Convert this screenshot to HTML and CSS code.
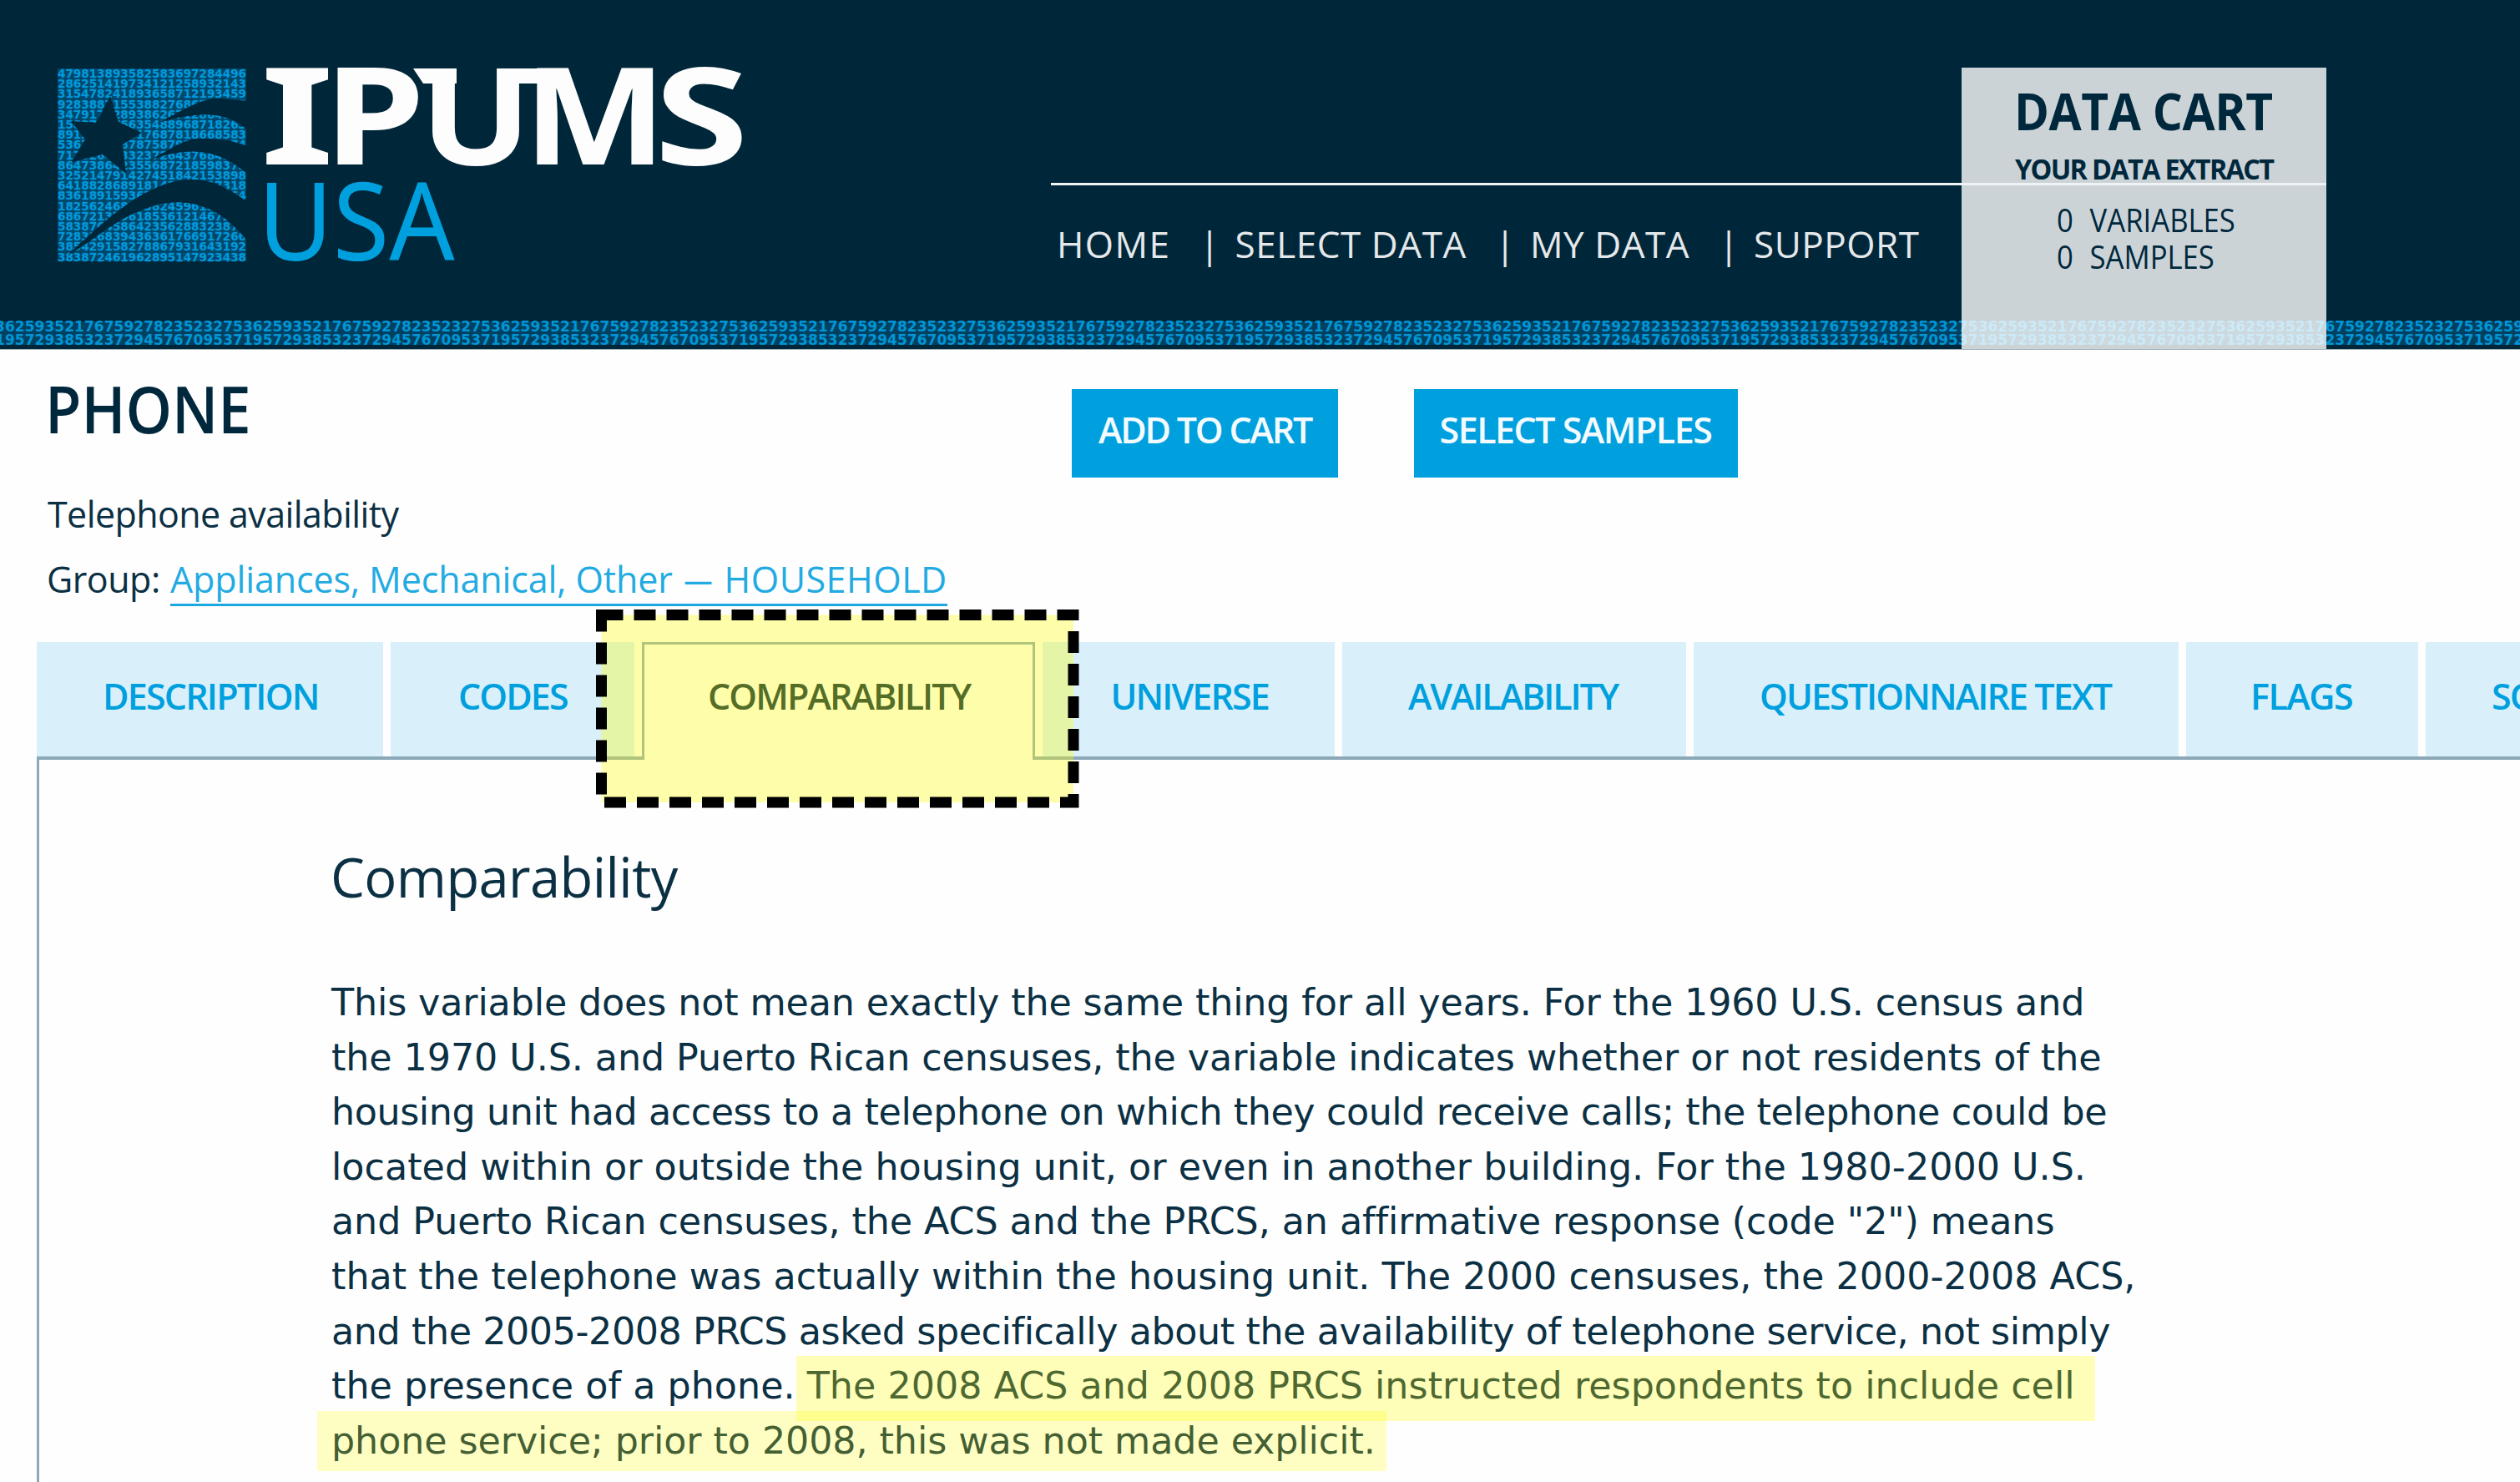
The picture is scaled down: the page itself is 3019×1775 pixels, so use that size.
FILE: index.html
```html
<!DOCTYPE html>
<html lang="en">
<head>
<meta charset="utf-8">
<title>IPUMS USA: PHONE</title>
<link rel="stylesheet" href="styles.css">
</head>
<body>
<header class="site-header">
  <div class="digit-strip" aria-hidden="true">
    <div>3625935217675927823523275362593521767592782352327536259352176759278235232753625935217675927823523275362593521767592782352327536259352176759278235232753625935217675927823523275362593521767592782352327536259352176759278235232753625935217675927823523275362593</div>
    <div>1957293853237294576709537195729385323729457670953719572938532372945767095371957293853237294576709537195729385323729457670953719572938532372945767095371957293853237294576709537195729385323729457670953719572938532372945767095371957293853237294576709537195729</div>
  </div>
  <svg class="logo" width="830" height="240" viewBox="0 0 830 240" role="img" aria-label="IPUMS USA">
    <rect class="logo-glow" width="226" height="231"/>
    <g class="logo-digits">
      <text x="0" y="11" textLength="226" lengthAdjust="spacingAndGlyphs">479813893582583697284496</text>
      <text x="0" y="23.2" textLength="226" lengthAdjust="spacingAndGlyphs">286251419734121258932143</text>
      <text x="0" y="35.4" textLength="226" lengthAdjust="spacingAndGlyphs">315478241893658712193459</text>
      <text x="0" y="47.6" textLength="226" lengthAdjust="spacingAndGlyphs">928388715538827686719345</text>
      <text x="0" y="59.8" textLength="226" lengthAdjust="spacingAndGlyphs">347917628938626712864938</text>
      <text x="0" y="72" textLength="226" lengthAdjust="spacingAndGlyphs">158371676635488968718263</text>
      <text x="0" y="84.2" textLength="226" lengthAdjust="spacingAndGlyphs">891264728917687818668583</text>
      <text x="0" y="96.4" textLength="226" lengthAdjust="spacingAndGlyphs">536728178787587923641974</text>
      <text x="0" y="108.6" textLength="226" lengthAdjust="spacingAndGlyphs">717326453323726437684153</text>
      <text x="0" y="120.8" textLength="226" lengthAdjust="spacingAndGlyphs">864738642355687218598373</text>
      <text x="0" y="133" textLength="226" lengthAdjust="spacingAndGlyphs">325214791427451842153898</text>
      <text x="0" y="145.2" textLength="226" lengthAdjust="spacingAndGlyphs">641882868918143658217318</text>
      <text x="0" y="157.4" textLength="226" lengthAdjust="spacingAndGlyphs">836189159367261843975264</text>
      <text x="0" y="169.6" textLength="226" lengthAdjust="spacingAndGlyphs">182562468173824596138472</text>
      <text x="0" y="181.8" textLength="226" lengthAdjust="spacingAndGlyphs">686721379618536121467238</text>
      <text x="0" y="194" textLength="226" lengthAdjust="spacingAndGlyphs">583876458642356288323871</text>
      <text x="0" y="206.2" textLength="226" lengthAdjust="spacingAndGlyphs">728316839436361766917266</text>
      <text x="0" y="218.4" textLength="226" lengthAdjust="spacingAndGlyphs">385429158278867931643192</text>
      <text x="0" y="230.6" textLength="226" lengthAdjust="spacingAndGlyphs">383872461962895147923438</text>
    </g>
    <g class="logo-cutout">
      <path d="M63 33 73 64 101 77 78 91 82 126 54 103 17 112 33 85 16 63 46 65Z"/>
      <path d="M118 66C150 52 165 36 195 36L228 39V74C205 54 175 48 118 66Z"/>
      <path d="M110 110C145 92 150 84 175 84L205 86 228 93V127C195 98 160 91 110 110Z"/>
      <path d="M12 224C60 178 110 133 161 133C190 133 210 148 228 160V208C195 163 150 150 105 168C70 180 45 205 12 224Z"/>
    </g>
    <g class="logo-name">
      <text transform="translate(243 115) scale(1.41 1)">I</text>
      <text transform="translate(319 115) scale(1.21 1)">P</text>
      <text transform="translate(434 115) scale(1.1 1)">U</text>
      <text transform="translate(558 115) scale(1.13 1)">M</text>
      <text transform="translate(715 115) scale(1.27 1)">S</text>
      <path d="M426 0H478V18H438Z M528 0H600V18H528Z"/>
    </g>
    <text class="logo-product" transform="translate(240 230) scale(.945 1)">USA</text>
  </svg>
  <div class="header-right">
    <nav class="main-nav">
      <a class="nav-home">HOME</a><i>|</i><a>SELECT DATA</a><i>|</i><a>MY DATA</a><i>|</i><a>SUPPORT</a>
    </nav>
    <aside class="cart">
      <h2>DATA CART</h2>
      <h3>YOUR DATA EXTRACT</h3>
      <dl>
        <div><dt>0</dt><dd>VARIABLES</dd></div>
        <div><dt>0</dt><dd>SAMPLES</dd></div>
      </dl>
    </aside>
  </div>
</header>
<section class="intro">
  <div class="summary">
    <h1>PHONE</h1>
    <p class="label">Telephone availability</p>
    <p><span class="group">Group:</span><a>Appliances, Mechanical, Other <span class="dash">—</span> <span class="level">HOUSEHOLD</span></a></p>
  </div>
  <div class="actions">
    <button class="add">ADD TO CART</button>
    <button class="select">SELECT SAMPLES</button>
  </div>
</section>
<nav class="tabs">
  <a class="desc">DESCRIPTION</a>
  <a class="codes">CODES</a>
  <a class="active">COMPARABILITY</a>
  <a class="universe">UNIVERSE</a>
  <a class="avail">AVAILABILITY</a>
  <a>QUESTIONNAIRE TEXT</a>
  <a class="flags">FLAGS</a>
  <a>SOURCE</a>
</nav>
<main class="panel">
  <h2>Comparability</h2>
  <p>
    <span class="snug">This variable does not mean exactly the same thing for all years. For the 1960 U.S. census and</span>
    <span>the 1970 U.S. and Puerto Rican censuses, the variable indicates whether or not residents of the</span>
    <span class="tight">housing unit had access to a telephone on which they could receive calls; the telephone could be</span>
    <span class="loose">located within or outside the housing unit, or even in another building. For the 1980-2000 U.S.</span>
    <span>and Puerto Rican censuses, the ACS and the PRCS, an affirmative response (code "2") means</span>
    <span class="loose">that the telephone was actually within the housing unit. The 2000 censuses, the 2000-2008 ACS,</span>
    <span class="tight">and the 2005-2008 PRCS asked specifically about the availability of telephone service, not simply</span>
    <span class="loose">the presence of a phone. The 2008 ACS and 2008 PRCS instructed respondents to include cell</span>
    <span>phone service; prior to 2008, this was not made explicit.</span>
  </p>
</main>
<div class="mark mark-first"></div>
<div class="mark mark-second"></div>
<svg class="callout" width="579" height="238" viewBox="0 0 579 238" aria-hidden="true">
  <rect x="6.5" y="6.5" width="565.5" height="224.5"/>
</svg>
</body>
</html>
```
FILE: styles.css
```css
* { box-sizing: border-box; margin: 0; padding: 0; }
body {
  position: relative;
  width: 3019px;
  height: 1775px;
  overflow: hidden;
  background: #fefefe;
  color: #0b3044;
  font-family: "Open Sans", "Noto Sans", sans-serif;
}

/* Header */
.site-header {
  position: relative;
  display: flex;
  height: 419px;
  padding: 82px 0 0 69px;
  overflow: hidden;
  background: #002639;
  border-bottom: 1px solid #9fb0b9;
}
.digit-strip {
  position: absolute;
  left: -6px;
  top: 383px;
  background: linear-gradient(#002639 2px, #004161 2px 30px, #002639 30px);
  color: #0096d6;
  font: bold 17px/16px "DejaVu Sans", sans-serif;
  letter-spacing: .05px;
  white-space: nowrap;
}
.logo { flex: none; display: block; overflow: visible; }
.logo-glow { fill: #00476a; }
.logo-digits { fill: #009cdf; stroke: #0088c4; stroke-width: .3; font: bold 14px "DejaVu Sans", sans-serif; }
.logo-cutout { fill: #002639; }
.logo-name { fill: #fdfdfd; font: bold 161px "Noto Sans", sans-serif; }
.logo-product { fill: #00a0df; font: 130px "Noto Sans", sans-serif; }
.header-right {
  position: relative;
  display: flex;
  justify-content: space-between;
  width: 1528px;
  margin: -1px 0 0 360px;
}
.header-right::after {
  content: "";
  position: absolute;
  left: 0;
  right: 0;
  top: 138px;
  height: 3px;
  background: #f0f3f5;
}
.main-nav {
  display: grid;
  grid-template-columns: 171px 41.6px 312.4px 41px 227px 41px auto;
  align-content: start;
  padding: 181px 0 0 7px;
  color: #e4e8ea;
  font-size: 44px;
  line-height: 60px;
  letter-spacing: .55px;
  white-space: nowrap;
}
.main-nav i { font-style: normal; }
.main-nav .nav-home { letter-spacing: 1.4px; }
.main-nav a:not(.nav-home) { padding-left: 1px; }
.cart {
  width: 437px;
  padding-top: 17px;
  background: rgba(255, 255, 255, .8);
  color: #00283c;
  white-space: nowrap;
}
.cart h2, .cart h3 { transform-origin: 0 0; font-weight: 700; }
.cart h2 { margin-left: 62.5px; font-size: 61px; line-height: 70px; letter-spacing: -.5px; transform: scaleX(.931); }
.cart h3 { margin: 12px 0 0 64px; font-size: 34px; line-height: 44px; letter-spacing: -1.8px; transform: scaleX(.955); }
.cart dl { margin: 17px 0 0 114px; font-size: 38.5px; line-height: 44px; transform: scaleX(.9); transform-origin: 0 0; }
.cart dl div { display: flex; }
.cart dt { width: 44px; }

/* Variable summary */
.intro { display: flex; height: 350px; }
.summary { width: 1284px; padding: 20px 0 0 57px; font-size: 43px; line-height: 78px; white-space: nowrap; }
.summary h1 {
  margin: 0 0 37.5px -3.5px;
  color: #00283c;
  font-size: 78px;
  font-weight: 600;
  line-height: 100px;
  transform: scaleX(.905);
  transform-origin: 0 0;
}
.label { letter-spacing: -.6px; }
.group { display: inline-block; width: 148px; margin-left: -1px; letter-spacing: -.5px; }
.summary a { color: #22abe2; border-bottom: 3px solid #1ba8e1; letter-spacing: -.1px; }
.dash { display: inline-block; margin: 0 -1.7px; line-height: 1; transform: scaleX(.8); }
.level { letter-spacing: .5px; }
.actions { display: flex; gap: 91px; padding-top: 47px; align-items: flex-start; }
.actions button {
  height: 106px;
  padding: 0 0 8px 32px;
  border: 0;
  background: #00a0df;
  color: #f4fbfe;
  font: 600 43px/60px "Open Sans", sans-serif;
  text-align: left;
  white-space: nowrap;
}
.add { width: 319px; letter-spacing: -2.21px; }
.actions .select { width: 388px; padding-left: 30.5px; letter-spacing: -1.5px; }

/* Tabs */
.tabs {
  position: relative;
  display: grid;
  grid-template-columns: 415px 292px 471px 350px 412px 581px 278px 200px;
  grid-template-rows: 137px;
  column-gap: 9px;
  margin-left: 44px;
  height: 137px;
  color: #00a0df;
  font-size: 43px;
  font-weight: 600;
  line-height: 130px;
  letter-spacing: -1.92px;
  white-space: nowrap;
}
.tabs a { padding-left: 79px; background: #d9f0fa; }
.tabs .active {
  height: 141px;
  padding-left: 76px;
  border: 3px solid #8aa8b8;
  border-bottom: 0;
  background: #fefefe;
  color: #00283c;
  line-height: 124px;
}
.tabs .desc { letter-spacing: -1.8px; }
.tabs .codes { padding-left: 81px; }
.tabs .universe { padding-left: 81.5px; }
.tabs .avail { letter-spacing: -2.1px; }
.tabs .flags { padding-left: 77px; letter-spacing: -1.5px; }

/* Tab content */
.panel {
  height: 900px;
  margin-left: 44px;
  padding: 95px 0 0 350px;
  border: solid #8aa8b8;
  border-width: 4px 0 0 3px;
}
.panel h2 { margin: 0 0 73px -1px; font-size: 65px; font-weight: 400; line-height: 90px; letter-spacing: -.6px; }
.panel p { font: 44.4px/65.6px "DejaVu Sans", sans-serif; letter-spacing: -.09px; white-space: nowrap; }
.panel p span { display: block; }
.panel .snug { letter-spacing: -.14px; }
.panel .tight { letter-spacing: -.42px; }
.panel .loose { letter-spacing: .01px; }

/* Annotations laid over the page */
.mark { position: absolute; }
.mark-first { left: 954px; top: 1624px; width: 1556px; height: 78px; background: rgba(255, 255, 0, .27); }
.mark-second { left: 380px; top: 1690px; width: 1281px; height: 72px; background: rgba(255, 255, 0, .23); }
.callout { position: absolute; left: 713.5px; top: 730px; }
.callout rect { fill: rgba(255, 255, 0, .33); stroke: #000; stroke-width: 13; stroke-dasharray: 26 13; }
```
